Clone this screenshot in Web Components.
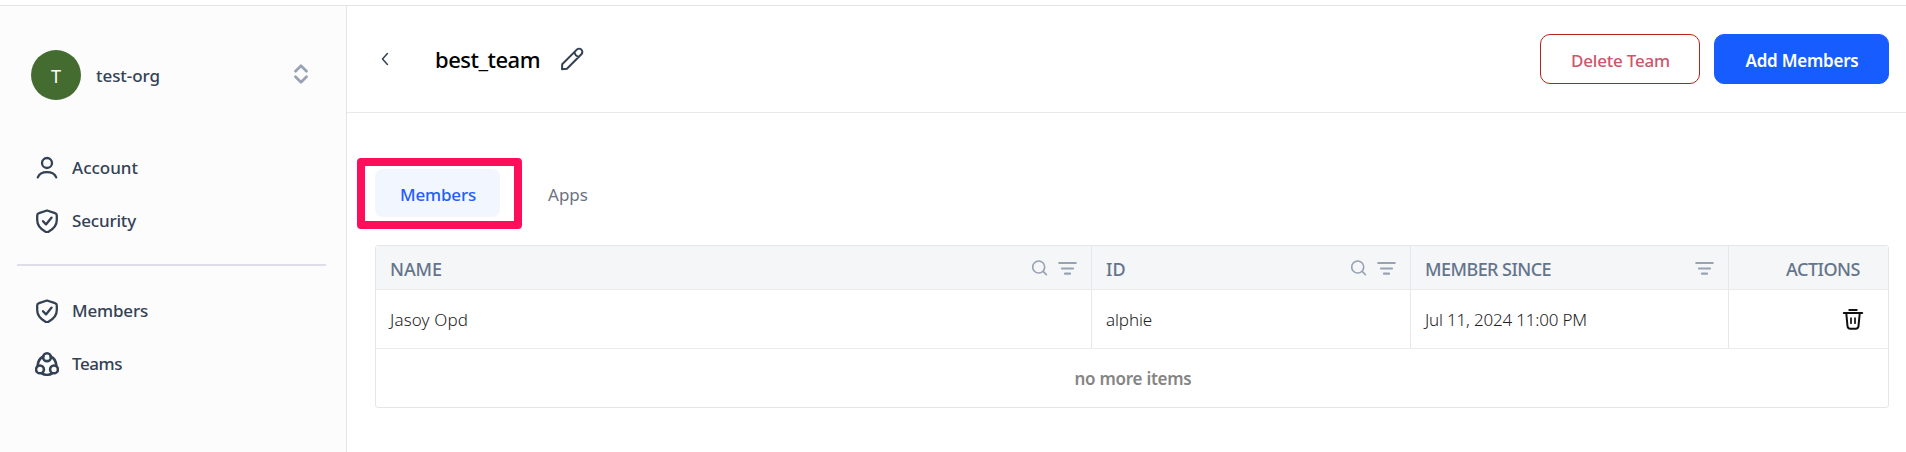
<!DOCTYPE html>
<html lang="en">
<head>
<meta charset="utf-8">
<title>best_team</title>
<style>
body{margin:0;background:#fff;overflow:hidden;font-family:"Noto Sans","Open Sans",sans-serif;font-size:17px;color:#334155}
</style>
</head>
<body>
<team-app></team-app>
<script>
const define = (name, html, setup) => customElements.define(name, class extends HTMLElement {
  connectedCallback() {
    if (this.shadowRoot) return;
    const t = document.createElement('template');
    t.innerHTML = html;
    this.attachShadow({ mode: 'open' }).appendChild(t.content.cloneNode(true));
    if (setup) setup(this, this.shadowRoot);
  }
});

const icons = {
  user: [24, 24, '<g stroke-width="2.300"><circle cx="12" cy="7" r="5"/><path d="M2.800 21.400c1.300-3.200 4.900-5.200 9.200-5.200s7.900 2 9.200 5.200"/></g>'],
  shield: [24, 24, '<g stroke-width="2.300"><path d="M12 1.500 4 4.200C2.700 4.600 2.200 5.200 2.200 6.500V11c0 5 2.300 8.500 8.300 11.700q1.500.8 3 0c6-3.200 8.300-6.700 8.300-11.700V6.500c0-1.300-.5-1.900-1.800-2.300Z"/><path d="m8 12.200 3 3.200 5.600-6.800"/></g>'],
  team: [24, 24, '<g stroke-width="2.600"><circle cx="12" cy="5.200" r="3.900"/><circle cx="5" cy="17.400" r="3.900"/><circle cx="19" cy="17.400" r="3.900"/><path d="M8.300 4.500C5 6 2.800 9.500 2.600 14M15.700 4.500C19 6 21.200 9.500 21.400 14M7 21.300c2.800 1.900 7.200 1.900 10 0"/></g>'],
  updown: [14, 20, '<path stroke-width="2.700" d="M1.500 7.200 7 1.800l5.500 5.400M1.500 12.800 7 18.200l5.500-5.400"/>'],
  back: [8, 14, '<path stroke-width="1.500" d="M6.400 1.600 1.500 7l4.900 5.400"/>'],
  pencil: [24, 24, '<path stroke-width="2" d="m2 22.200.2-4.900L16.800 2.600a3.250 3.250 0 0 1 4.600 4.600L6.900 21.700ZM14.500 5q.5 4.200 4.700 4.700"/>'],
  search: [16, 16, '<g stroke-width="1.600"><circle cx="6.700" cy="7" r="6"/><path d="m11.400 11.600 3 3"/></g>'],
  filter: [19, 14, '<path stroke-width="2.200" d="M1.300 2h16.400M4 7.500h11M7 12.700h5"/>'],
  trash: [22, 22, '<path stroke-width="2" d="M7.300 2h7.400M1.800 5h18.400M4.300 5.500l1.200 12.700q.3 2.500 2.700 2.500h5.600q2.400 0 2.700-2.500l1.200-12.700"/><path stroke-width="1.700" d="M9 10.200v5M13 10.200v5"/>']
};
define('ui-icon', '<style>:host{display:block;flex:none;line-height:0}svg{display:block;fill:none;stroke:currentColor;stroke-linecap:round;stroke-linejoin:round}</style>', (el, root) => {
  const [w, h, body] = icons[el.getAttribute('name')];
  root.innerHTML += `<svg width="${w}" height="${h}" viewBox="0 0 ${w} ${h}">${body}</svg>`;
});

/* Text tracked so that it fills the width given in "w". */
define('ui-text', '<style>:host{display:block;flex:none;white-space:nowrap;line-height:24px}span{display:inline-block}</style><span><slot></slot></span>', (el, root) => {
  const span = root.querySelector('span'), w = +el.getAttribute('w');
  el.style.width = w + 'px';
  span.style.letterSpacing = (w - span.getBoundingClientRect().width) / el.textContent.length + 'px';
});

define('nav-item', `<style>:host{display:flex;align-items:center;height:53px;padding-left:35px;gap:13px;font-weight:500}</style><slot></slot>`);

define('side-bar', `<style>
:host{display:block;box-sizing:border-box;width:347px;background:#fcfcfc;border-right:1px solid #e3e4e8}
.org{display:flex;align-items:center;height:50px;padding:44px 38px 0 31px;font-weight:500}
.org>ui-text{padding-top:2px}
.avatar{display:grid;place-items:center;box-sizing:border-box;width:50px;height:50px;padding-top:2px;border-radius:50%;background:#446c30;color:#fff;font-size:18px;font-weight:400;margin-right:15px}
.updown{margin:-2px 0 0 auto;color:#98a2b3}
.main{padding-top:41px}
hr{border:0;height:2px;margin:17px 20px 18px 17px;background:#dedee9}
</style>
<div class="org"><div class="avatar"><ui-text w="10">T</ui-text></div><ui-text w="64">test-org</ui-text><ui-icon class="updown" name="updown"></ui-icon></div>
<div class="main"><nav-item><ui-icon name="user"></ui-icon><ui-text w="66">Account</ui-text></nav-item>
<nav-item><ui-icon name="shield"></ui-icon><ui-text w="64">Security</ui-text></nav-item></div>
<hr>
<nav-item><ui-icon name="shield"></ui-icon><ui-text w="76">Members</ui-text></nav-item>
<nav-item><ui-icon name="team"></ui-icon><ui-text w="50">Teams</ui-text></nav-item>`);

define('ui-button', `<style>
:host{display:flex;box-sizing:border-box;align-items:center;justify-content:center;height:50px;width:160px;border:1px solid #b42318;border-radius:10px;color:#cf546c;font-weight:500;padding:3px 0 0 1px}
:host([primary]){width:175px;background:#175cff;border-color:#175cff;color:#fff;font-weight:600}
</style><slot></slot>`);

define('page-header', `<style>
:host{display:flex;box-sizing:border-box;align-items:center;height:107px;border-bottom:1px solid #e8e9eb;padding:0 17px 0 34px}
.title{font-size:22px;font-weight:500;color:#000;margin:-1px 0 0 46px}
.pencil{margin-left:20px}
.actions{display:flex;gap:14px;margin-left:auto}
</style>
<ui-icon name="back"></ui-icon><ui-text class="title" w="105">best_team</ui-text><ui-icon class="pencil" name="pencil"></ui-icon>
<div class="actions"><ui-button><ui-text w="99">Delete Team</ui-text></ui-button><ui-button primary><ui-text w="113">Add Members</ui-text></ui-button></div>`);

define('tab-bar', `<style>
:host{display:flex;align-items:center;height:71px}
.mark{box-sizing:border-box;width:165px;height:71px;border:8px solid #ff0e5b;border-radius:4px;padding:3px 14px 4px 10px}
.tab{display:grid;place-items:center;box-sizing:border-box;width:125px;height:48px;padding:3px 0 0 1px;background:#f2f6ff;border-radius:8px;color:#215dff;font-weight:500}
.other{margin-left:26px;color:#6b7280;padding-top:3px}
</style>
<div class="mark"><div class="tab"><ui-text w="76">Members</ui-text></div></div><ui-text class="other" w="40">Apps</ui-text>`);

define('member-table', `<style>
:host{display:block;box-sizing:border-box;width:1514px;height:163px;border:1px solid #e5e6e9;border-radius:3px}
.row{display:grid;grid-template-columns:716px 319px 318px 159px;height:58px;border-bottom:1px solid #ebebed;color:#222;font-weight:300}
.row>div{display:flex;align-items:center;box-sizing:border-box;padding:0 14px;border-right:1px solid #e7e8eb}
.row>div:last-child{border:0;justify-content:flex-end;padding-right:24px;color:#111}
.row:not(.head) ui-text{padding-top:1px}
.head{height:43px;background:#f4f6f8;color:#64748b;font-size:18px;font-weight:500}
.head ui-text{padding-top:2px}
.head>div:last-child{padding-right:28px;color:inherit}
.tools{display:flex;align-items:center;gap:10px;margin-left:auto;color:#98a2b3}
.more{display:grid;place-items:center;height:58px;padding:1px 0 0 2px;box-sizing:border-box;color:#858585;font-weight:600}
</style>
<div class="row head"><div><ui-text w="52">NAME</ui-text><span class="tools"><ui-icon name="search"></ui-icon><ui-icon name="filter"></ui-icon></span></div>
<div><ui-text w="20">ID</ui-text><span class="tools"><ui-icon name="search"></ui-icon><ui-icon name="filter"></ui-icon></span></div>
<div><ui-text w="126">MEMBER SINCE</ui-text><span class="tools"><ui-icon name="filter"></ui-icon></span></div>
<div><ui-text w="74">ACTIONS</ui-text></div></div>
<div class="row"><div><ui-text w="78">Jasoy Opd</ui-text></div><div><ui-text w="46">alphie</ui-text></div><div><ui-text w="162">Jul 11, 2024 11:00 PM</ui-text></div><div><ui-icon name="trash"></ui-icon></div></div>
<div class="more"><ui-text w="117">no more items</ui-text></div>`);

define('team-app', `<style>
:host{display:grid;grid-template-columns:347px 1fr;box-sizing:border-box;height:452px;padding-top:5px}
:host{background:linear-gradient(#e3e4e8,#e3e4e8) 0 5px/100% 1px no-repeat,#fff}
side-bar,main{margin-top:1px}
main{min-width:0}
.body{padding:45px 0 0 10px}
member-table{margin:16px 0 0 18px}
</style>
<side-bar></side-bar><main><page-header></page-header><div class="body"><tab-bar></tab-bar><member-table></member-table></div></main>`);
</script>
</body>
</html>
